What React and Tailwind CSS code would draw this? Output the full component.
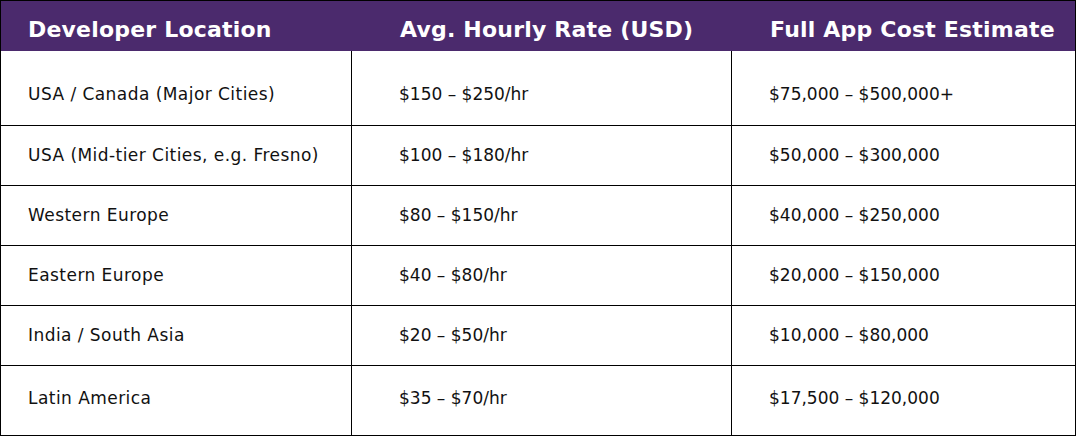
const rows = [
  ['USA / Canada (Major Cities)', '$150 – $250/hr', '$75,000 – $500,000+', 'h-[74px]', 'pt-[14px]'],
  ['USA (Mid-tier Cities, e.g. Fresno)', '$100 – $180/hr', '$50,000 – $300,000', 'h-[60px]', ''],
  ['Western Europe', '$80 – $150/hr', '$40,000 – $250,000', 'h-[60px]', ''],
  ['Eastern Europe', '$40 – $80/hr', '$20,000 – $150,000', 'h-[60px]', ''],
  ['India / South Asia', '$20 – $50/hr', '$10,000 – $80,000', 'h-[60px]', ''],
  ['Latin America', '$35 – $70/hr', '$17,500 – $120,000', 'h-[70px]', 'pb-[4px]'],
]

export default function App() {
  return (
    <div className="w-[1077px] h-[436px] bg-white font-['DejaVu_Sans',sans-serif] text-[#111]">
      <div className="w-[1076px] border border-black">
        <div className="flex h-[50px] pt-[6px] bg-[#4b2a6d] text-white text-[22px] font-bold tracking-[0.2px]">
          <div className="w-[351px] pl-[27px] flex items-center">Developer Location</div>
          <div className="w-[380px] pl-[48px] flex items-center">Avg. Hourly Rate (USD)</div>
          <div className="flex-1 pl-[38px] flex items-center">Full App Cost Estimate</div>
        </div>
        {rows.map(([loc, rate, cost, h, pad], i) => (
          <div key={i} className={`flex text-[17px] ${h} ${i > 0 ? 'border-t border-black' : ''}`}>
            <div className={`w-[351px] pl-[27px] flex items-center border-r border-black tracking-[0.45px] ${pad}`}>{loc}</div>
            <div className={`w-[380px] pl-[47px] flex items-center border-r border-black ${pad}`}>{rate}</div>
            <div className={`flex-1 pl-[37px] flex items-center ${pad}`}>{cost}</div>
          </div>
        ))}
      </div>
    </div>
  )
}
